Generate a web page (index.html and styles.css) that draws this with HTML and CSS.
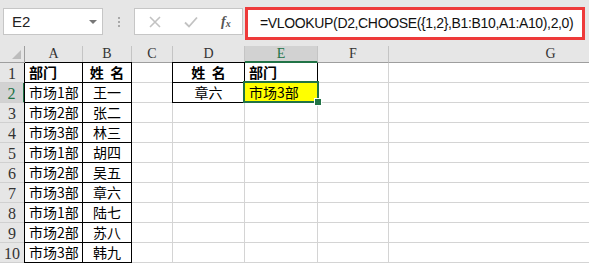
FILE: index.html
```html
<!DOCTYPE html>
<html>
<head>
<meta charset="utf-8">
<link rel="stylesheet" href="styles.css">
</head>
<body>
<div class="app">
  <div class="fbar">
    <div class="namebox"><span class="nm">E2</span><span class="dd"></span></div>
    <div class="dots"><i></i><i></i><i></i></div>
    <div class="fxbox">
      <svg class="ic" width="12" height="12" viewBox="0 0 12 12"><path d="M1 1L11 11M11 1L1 11" stroke="#c2c2c2" stroke-width="1.6" fill="none"/></svg>
      <svg class="ic" width="14" height="12" viewBox="0 0 14 12"><path d="M1 6.5L5 10.5L13 1.5" stroke="#c2c2c2" stroke-width="1.8" fill="none"/></svg>
      <span class="fx">f<sub>x</sub></span>
    </div>
    <div class="formula">=VLOOKUP(D2,CHOOSE({1,2},B1:B10,A1:A10),2,0)</div>
  </div>
  <div class="sheet">
    <div class="ch corner"><span class="tri"></span></div>
    <div class="ch">A</div><div class="ch">B</div><div class="ch">C</div><div class="ch">D</div><div class="ch act">E</div><div class="ch">F</div><div class="ch">G</div>

    <div class="rh">1</div>
    <div class="c t tl tt b">部门</div><div class="c t tt b ctr">姓&nbsp;&nbsp;名</div><div class="c"></div>
    <div class="c t tl tt b ctr">姓&nbsp;&nbsp;名</div><div class="c t b">部门</div><div class="c"></div><div class="c"></div>

    <div class="rh ract">2</div>
    <div class="c t tl">市场1部</div><div class="c t ctr">王一</div><div class="c"></div>
    <div class="c t tl ctr">章六</div><div class="c t sel">市场3部<span class="selbox"><span class="handle"></span></span></div><div class="c"></div><div class="c"></div>

    <div class="rh">3</div>
    <div class="c t tl">市场2部</div><div class="c t ctr">张二</div><div class="c"></div><div class="c"></div><div class="c"></div><div class="c"></div><div class="c"></div>
    <div class="rh">4</div>
    <div class="c t tl">市场3部</div><div class="c t ctr">林三</div><div class="c"></div><div class="c"></div><div class="c"></div><div class="c"></div><div class="c"></div>
    <div class="rh">5</div>
    <div class="c t tl">市场1部</div><div class="c t ctr">胡四</div><div class="c"></div><div class="c"></div><div class="c"></div><div class="c"></div><div class="c"></div>
    <div class="rh">6</div>
    <div class="c t tl">市场2部</div><div class="c t ctr">吴五</div><div class="c"></div><div class="c"></div><div class="c"></div><div class="c"></div><div class="c"></div>
    <div class="rh">7</div>
    <div class="c t tl">市场3部</div><div class="c t ctr">章六</div><div class="c"></div><div class="c"></div><div class="c"></div><div class="c"></div><div class="c"></div>
    <div class="rh">8</div>
    <div class="c t tl">市场1部</div><div class="c t ctr">陆七</div><div class="c"></div><div class="c"></div><div class="c"></div><div class="c"></div><div class="c"></div>
    <div class="rh">9</div>
    <div class="c t tl">市场2部</div><div class="c t ctr">苏八</div><div class="c"></div><div class="c"></div><div class="c"></div><div class="c"></div><div class="c"></div>
    <div class="rh">10</div>
    <div class="c t tl">市场3部</div><div class="c t ctr">韩九</div><div class="c"></div><div class="c"></div><div class="c"></div><div class="c"></div><div class="c"></div>
  </div>
</div>
</body>
</html>
```
FILE: styles.css
```css
html, body {
  margin: 0;
  padding: 0;
  background: #e6e6e6;
  overflow: hidden;
}
.app {
  width: 589px;
  height: 263px;
  overflow: hidden;
  background: #e6e6e6;
}
.fbar {
  height: 46px;
  display: flex;
  align-items: flex-start;
  box-sizing: border-box;
  padding-top: 8px;
}
.namebox {
  margin-left: 3px;
  width: 100px;
  height: 27px;
  box-sizing: border-box;
  background: #fff;
  border: 1px solid #c6c6c6;
  display: flex;
  align-items: center;
  justify-content: space-between;
  padding: 0 5px 0 8px;
  font-family: "Liberation Sans", "Noto Sans", sans-serif;
  font-size: 15px;
  color: #222;
}
.dd {
  width: 0;
  height: 0;
  border-left: 4px solid transparent;
  border-right: 4px solid transparent;
  border-top: 4px solid #777;
}
.dots {
  width: 31px;
  height: 27px;
  display: flex;
  flex-direction: column;
  align-items: center;
  justify-content: center;
  gap: 2px;
}
.dots i {
  display: block;
  width: 2px;
  height: 2px;
  background: #a8a8a8;
}
.fxbox {
  width: 109px;
  height: 27px;
  box-sizing: border-box;
  background: #fff;
  border: 1px solid #c6c6c6;
  display: flex;
  align-items: center;
  padding-left: 14px;
}
.fxbox .ic:first-child { margin-right: 23px; }
.fxbox .ic:nth-child(2) { margin-right: 23px; }
.fx {
  font-family: "Liberation Serif", serif;
  font-style: italic;
  font-weight: bold;
  font-size: 14px;
  color: #555;
}
.fx sub {
  font-size: 10px;
  vertical-align: -1px;
}
.formula {
  margin-left: 2px;
  margin-top: -1px;
  width: 340px;
  height: 33px;
  box-sizing: border-box;
  border: 3px solid #ee3a3a;
  background: #fff;
  font-family: "Liberation Sans", "Noto Sans", sans-serif;
  font-size: 14px;
  letter-spacing: -0.35px;
  color: #111;
  padding-left: 12px;
  line-height: 27px;
  white-space: nowrap;
}
.sheet {
  display: grid;
  grid-template-columns: 25px 58px 49px 41px 72px 73px 71px 324px;
  grid-template-rows: 17px repeat(10, 20px);
  background: #fff;
}
.ch {
  background: #e6e6e6;
  border-right: 1px solid #c4c4c4;
  border-bottom: 1px solid #9e9e9e;
  box-sizing: border-box;
  font-family: "Liberation Serif", serif;
  font-size: 14px;
  color: #333;
  text-align: center;
  line-height: 16px;
}
.ch.corner {
  position: relative;
  border-right-color: #9e9e9e;
}
.tri {
  position: absolute;
  right: 3px;
  bottom: 3px;
  width: 0;
  height: 0;
  border-left: 9px solid transparent;
  border-bottom: 9px solid #bcbcbc;
}
.ch.act {
  background: #d2d2d2;
  color: #217346;
  border-bottom: 2px solid #217346;
}
.rh {
  background: #e6e6e6;
  border-right: 1px solid #9e9e9e;
  border-bottom: 1px solid #d0d0d0;
  box-sizing: border-box;
  font-family: "Liberation Serif", serif;
  font-size: 16px;
  color: #333;
  text-align: center;
  line-height: 21px;
}
.rh.ract {
  background: #d2d2d2;
  color: #217346;
  border-right: 2px solid #217346;
}
.c {
  border-right: 1px solid #d4d4d4;
  border-bottom: 1px solid #d4d4d4;
  box-sizing: border-box;
  font-family: "Noto Sans CJK SC", "Noto Sans", sans-serif;
  font-size: 14px;
  color: #000;
  line-height: 19px;
  padding-left: 4px;
  white-space: nowrap;
  overflow: visible;
}
.c.t {
  border-right-color: #000;
  border-bottom-color: #000;
}
.c.tl { box-shadow: -1px 0 0 #000; }
.c.tt { box-shadow: 0 -1px 0 #000; }
.c.tl.tt { box-shadow: -1px 0 0 #000, 0 -1px 0 #000, -1px -1px 0 #000; }
.c.b { font-weight: bold; }
.c.ctr { text-align: center; padding-left: 0; }
.c.sel {
  background: #ffff00;
  position: relative;
}
.selbox {
  position: absolute;
  left: -2px;
  top: -2px;
  right: -2px;
  bottom: -1px;
  border: 2px solid #217346;
}
.handle {
  position: absolute;
  right: -5px;
  bottom: -5px;
  width: 6px;
  height: 6px;
  background: #217346;
  border: 1px solid #fff;
}
```
